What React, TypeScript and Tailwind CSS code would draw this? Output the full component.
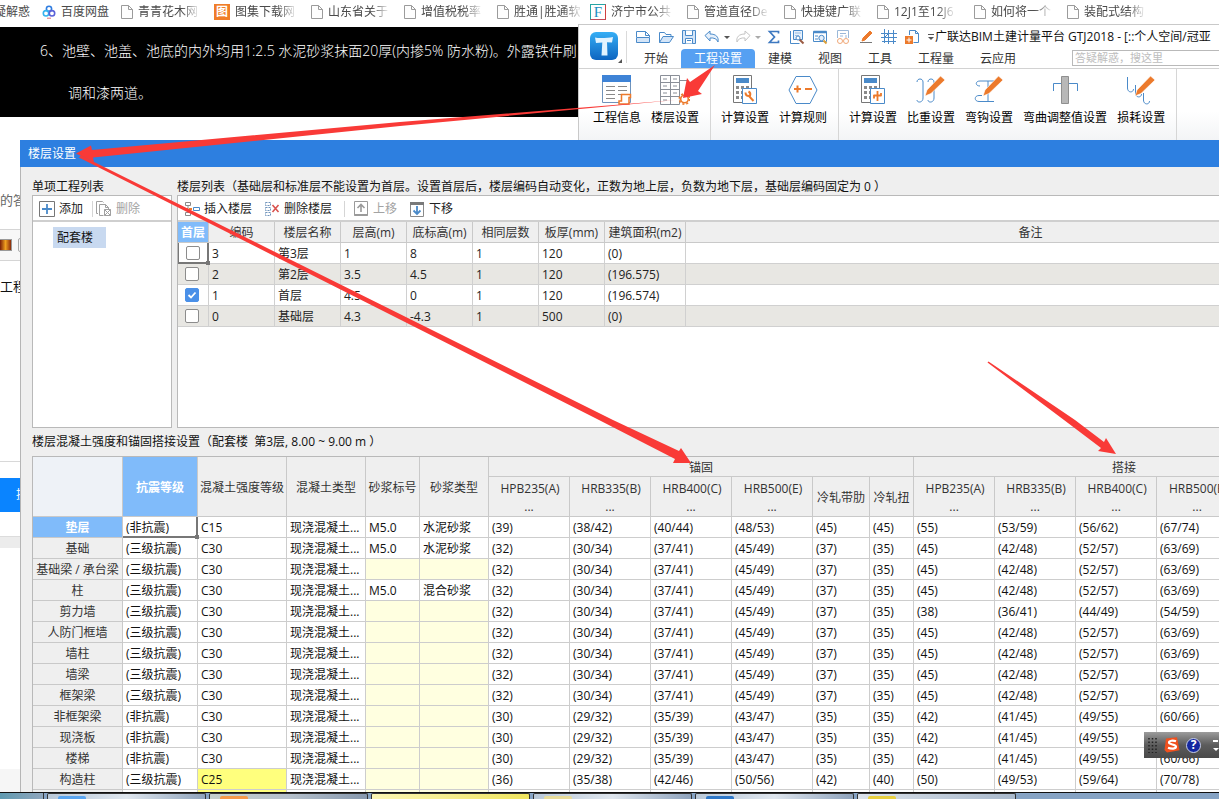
import React from "react";
import type { ReactNode } from "react";

const BLUE = "#4a8ac9";
const ORANGE = "#ec7a2c";
const GRAY = "#8a8a8a";

/* ---------- bookmarks bar ---------- */

function DocIcon() {
  return (
    <svg className="h-[14px] w-3 shrink-0" viewBox="0 0 12 14" fill="#fdfdfd" stroke="#9b9b9b">
      <path d="M.5.5h7l4 4v9h-11z" />
      <path d="M7.500.5v4h4" fill="none" />
    </svg>
  );
}

function CloudDriveIcon() {
  return (
    <svg className="h-[14px] w-[14px] shrink-0" viewBox="0 0 14 14" fill="none" strokeWidth="1.600">
      <circle cx="7" cy="3.800" r="2.600" stroke="#2f7de0" />
      <circle cx="4" cy="8.300" r="2.700" stroke="#35b3ee" />
      <circle cx="10" cy="8.300" r="2.700" stroke="#5a62d8" />
      <path d="M5 13.200h4" stroke="#e06a70" strokeWidth="1" />
    </svg>
  );
}

function AtlasIcon() {
  return (
    <span className="flex h-4 w-4 shrink-0 items-center justify-center bg-[#f07d28] text-[12px] leading-4 font-bold text-white">图</span>
  );
}

function FIcon() {
  return (
    <span className="flex h-4 w-4 shrink-0 items-center justify-center border border-t-[#27a5a5] border-r-[#d04040] border-b-[#c04a5a] border-l-[#27a5a5] font-['Liberation_Serif',serif] text-[15px] leading-4 text-[#1e8fc4]">F</span>
  );
}

const bookmarks: { text: string; width: string; icon: ReactNode }[] = [
  { text: "百度网盘", width: "w-[79px]", icon: <CloudDriveIcon /> },
  { text: "青青花木网", width: "w-[93px]", icon: <DocIcon /> },
  { text: "图集下载网", width: "w-[97px]", icon: <AtlasIcon /> },
  { text: "山东省关于", width: "w-[93px]", icon: <DocIcon /> },
  { text: "增值税税率", width: "w-[93px]", icon: <DocIcon /> },
  { text: "胜通|胜通软", width: "w-[93px]", icon: <DocIcon /> },
  { text: "济宁市公共", width: "w-[97px]", icon: <FIcon /> },
  { text: "管道直径De", width: "w-[97px]", icon: <DocIcon /> },
  { text: "快捷键广联", width: "w-[93px]", icon: <DocIcon /> },
  { text: "12J1至12J6", width: "w-[97px]", icon: <DocIcon /> },
  { text: "如何将一个", width: "w-[93px]", icon: <DocIcon /> },
  { text: "装配式结构", width: "w-[93px]", icon: <DocIcon /> },
];

function BookmarksBar() {
  return (
    <nav className="flex h-6 shrink-0 items-center overflow-hidden bg-white text-[#4a4a4a]">
      <a href="#" className="flex w-[42px] shrink-0 justify-start">
        <span className="-ml-1.5 whitespace-nowrap">疑解惑</span>
      </a>
      {bookmarks.map((b) => (
        <a key={b.text} href="#" className={`flex shrink-0 items-center gap-[5px] ${b.width}`}>
          {b.icon}
          <span
            className={
              b.text === "百度网盘"
                ? "whitespace-nowrap"
                : "whitespace-nowrap [mask-image:linear-gradient(to_right,black_72%,transparent_104%)]"
            }
          >
            {b.text}
          </span>
        </a>
      ))}
    </nav>
  );
}

/* ---------- ribbon ---------- */

function Q({ children }: { children: ReactNode }) {
  return (
    <svg className="h-4 w-4" viewBox="0 0 16 16" fill="none" stroke={BLUE}>
      {children}
    </svg>
  );
}

const quick: { name: string; icon: ReactNode; caret?: string }[] = [
  { name: "新建", icon: <Q><path d="M1.500 8V2.500h9l4 4V8M10.500 2.500v4h4" /><path d="M1.500 8.500h13v5h-13z" fill="#d4e5f8" /></Q> },
  { name: "打开", icon: <Q><path d="M1.500 13.500v-10h5l1.500 2h5v2" /><path d="M1.500 13.500l3.500-6h10.500l-4 6z" fill="#d4e5f8" /></Q> },
  { name: "保存", icon: <Q><path d="M1.500 1.500h13v13h-13z" fill="#d4e5f8" /><path d="M4.500 1.500v5h7v-5M4.500 14.500v-5h7v5M6 11.500h4" fill="#fff" /></Q> },
  { name: "撤销", icon: <Q><path d="M1 6.500l5-4.500v3c6 0 9 3 8 8-1-3-4-4.500-8-4v3z" fill="#e6f0fb" /></Q>, caret: "#555" },
  { name: "恢复", icon: <Q><path d="M15 6.500l-5-4.500v3c-6 0-9 3-8 8 1-3 4-4.500 8-4v3z" stroke="#c4c4c4" /></Q>, caret: "#aaa" },
  { name: "汇总计算", icon: <Q><path d="M12.500 4.500v-2h-9l5 5.500-5 5.500h9v-2" strokeWidth="1.700" stroke="#3d78c0" /></Q> },
  { name: "查看工程量", icon: <Q><path d="M4.500 1.500h9v9h-9z" fill="#e6f0fb" /><path d="M1.500 2v12.500h9M6.500 4h1m1 0h1m1 0h1M6.500 6.500h1m1 0h1" /><path d="M10.500 10.500l4 4" stroke="#9a5b43" strokeWidth="2" /><circle cx="9" cy="9" r="2" fill="#fff" /></Q> },
  { name: "查找图元", icon: <Q><path d="M1.500 2.500h13v10h-13z" /><path d="M1.500 3h13" strokeWidth="2.500" /><path d="M3 7h3M3 10h3" /><circle cx="9.500" cy="9" r="2.700" fill="#e6f0fb" /><path d="M11.500 11.500l3 3" stroke="#dca03a" strokeWidth="2" /></Q> },
  { name: "查看报表", icon: <Q><path d="M2.500 9V1.500h11V9" stroke="#9bb8d8" /><path d="M5 4.500h6M5 7h3m3-1v3" stroke="#9bb8d8" /><circle cx="5" cy="12" r="2.500" stroke="#f0a878" /><circle cx="11" cy="12" r="2.500" stroke="#f0a878" /></Q> },
  { name: "编辑", icon: <Q><path d="M5 9l7-7 2 2-7 7-3 1z" fill={ORANGE} stroke={ORANGE} /><path d="M2 13.500h12" stroke="#777" /></Q> },
  { name: "轴网", icon: <Q><path d="M3.500 0v14M7.500 1v14M12.500 1v14M0 4.500h16M0 8.500h16M1 12.500h14M4 8l4-4" /></Q> },
  { name: "导出", icon: <Q><path d="M5.500 6V1.500h6l3 3v9h-5" /><path d="M11.500 1.500v3h3" /><path d="M1 7h8v8H1z" fill={ORANGE} stroke="none" /><path d="M5 8.500v5M2.500 11h5" stroke="#fff" /></Q> },
];

function Caret({ color }: { color: string }) {
  return (
    <svg className="h-2 w-2 shrink-0" viewBox="0 0 8 8">
      <path d="M1 3h6L4 6z" fill={color} />
    </svg>
  );
}

function Big({ children }: { children: ReactNode }) {
  return (
    <svg className="h-[30px] w-[30px]" viewBox="0 0 30 30" fill="none" stroke={BLUE}>
      {children}
    </svg>
  );
}

const pencil = (
  <path d="M9 21l2-6L24.500 1l4.500 4L15 18.500z" fill={ORANGE} stroke="#fff" strokeWidth=".6" />
);

const calcBody = (
  <>
    <path d="M3.500.5h18v27h-18z" stroke="#777" fill="#fff" />
    <path d="M6 3h13v5H6z" fill={BLUE} stroke="none" />
    <path d="M6 11h3v3H6zM11 11h3v3h-3zM16 11h3v3h-3zM6 16h3v3H6zM11 16h3v3h-3zM6 21h3v3H6zM11 21h3v3h-3z" fill={GRAY} stroke="none" />
  </>
);

const ribbonGroups: { label: string; icon: ReactNode }[][] = [
  [
    {
      label: "工程信息",
      icon: <Big><path d="M.5.5h28v27H.5z" stroke="#6f93bb" fill="#fff" /><path d="M0 0h29v7H0z" fill="#3e83d6" stroke="none" /><path d="M4 11.500h9M16 11.500h9M4 15.500h9M16 15.500h9M4 19.500h9M16 19.500h9M4 23.500h9" stroke="#888" /><path d="M19.500 19.500h9v3h-1.500v6.500h-10v-3h2.500z" fill="#fff" stroke={ORANGE} strokeWidth="1.500" /></Big>,
    },
    {
      label: "楼层设置",
      icon: <Big><path d="M.5.500h19v29H.5zM10.500.5v29M.5 7.500h19M.5 14.500h19M.5 21.500h19M3 4h4M3 11h4M3 18h4M3 25h4M13 4h4M13 11h4M13 18h4M19.500 5.500h8v14" stroke="#8a8f98" /><circle cx="24.500" cy="24" r="5.200" fill="#fff" stroke={ORANGE} strokeWidth="1.600" strokeDasharray="2 2.080" /><circle cx="24.500" cy="24" r="3.800" fill="#fff" stroke={ORANGE} strokeWidth="1.600" /></Big>,
    },
  ],
  [
    {
      label: "计算设置",
      icon: <Big>{calcBody}<path d="M12.500 13.500h14v15h-14z" fill="#fff" /><path d="M15.500 17.500c0 3 2 3.500 3.500 3.500l4.500 5M18.500 16.500c2 1 2 3 1.500 4.500" stroke={ORANGE} strokeWidth="2" /></Big>,
    },
    {
      label: "计算规则",
      icon: <Big><path d="M8 1.500h14L29 15l-7 13.500H8L1 15z" fill="#fff" /><path d="M6 14h7M9.500 10.500v7M17 14h7" stroke={ORANGE} strokeWidth="2" /></Big>,
    },
  ],
  [
    {
      label: "计算设置",
      icon: <Big>{calcBody}<path d="M12.500 13.500h14v15h-14z" fill="#fff" /><path d="M19.500 16v10M15.500 20.500h8M16 20v3.500M23 18v3" stroke={ORANGE} strokeWidth="1.800" /></Big>,
    },
    {
      label: "比重设置",
      icon: <Big><path d="M1 7c0-4 6-4 6 0v16c0 5-6 5-6 2M12 7c0-4 6-4 6 0v16c0 5-6 5-6 2" />{pencil}</Big>,
    },
    {
      label: "弯钩设置",
      icon: <Big><path d="M6 11c-5 0-5-5 0-5h14M14 6v20M18 26.500H5c-5 0-5-6 0-6h3M12 26.500h8" />{pencil}</Big>,
    },
    {
      label: "弯曲调整值设置",
      icon: <Big><path d="M3.500 16V8.500h24V16" /><path d="M11.500 1.500h7v27h-7z" fill="#b8b8b8" stroke="#8f8f8f" /></Big>,
    },
    {
      label: "损耗设置",
      icon: <Big><path d="M1.500 2v11c0 5 6 5 6 1M9.500 10v8c0 5 6 5 6 1M17.500 18v7c0 5 6 5 6 1" />{pencil}</Big>,
    },
  ],
];

const tabs = ["开始", "工程设置", "建模", "视图", "工具", "工程量", "云应用"];

function AppLogo() {
  return (
    <svg className="h-8 w-8" viewBox="0 0 32 32">
      <defs>
        <linearGradient id="logo" x1="0" y1="0" x2="0" y2="1">
          <stop offset="0" stopColor="#35aef5" />
          <stop offset="1" stopColor="#0d64c0" />
        </linearGradient>
      </defs>
      <rect x="0" y="0" width="28" height="28" rx="6" fill="url(#logo)" />
      <path d="M5 5.500c4 1 13 .5 18-.5l-1 5.500-5-.3.5 13.300h-6l.8-13L6 11z" fill="#e2f3ff" />
      <path d="M32 27v4h-4z" fill="#555" />
    </svg>
  );
}

function Ribbon() {
  return (
    <section className="flex min-w-0 flex-1 flex-col overflow-hidden border-t border-l border-[#c9c9c9] bg-white">
      <div className="flex h-11 shrink-0 border-b border-[#d2d2d2]">
        <div className="flex w-12 shrink-0 items-center justify-end">
          <div className="flex h-8 items-start border-r border-[#dadada] pr-1 pt-px">
            <AppLogo />
          </div>
        </div>
        <div className="flex min-w-0 flex-1 flex-col justify-between">
          <div className="flex h-6 items-center overflow-hidden pl-1">
            {quick.map((q) => (
              <span key={q.name} className="flex shrink-0 items-center">
                <button type="button" aria-label={q.name} className="flex w-[23px] justify-center">
                  {q.icon}
                </button>
                {q.caret && <Caret color={q.caret} />}
              </span>
            ))}
            <svg className="ml-1 h-2 w-2 shrink-0" viewBox="0 0 8 8">
              <path d="M1 1.500h6" stroke="#555" />
              <path d="M1 4h6L4 7z" fill="#555" />
            </svg>
            <span className="whitespace-nowrap text-[#111]">
              广联达BIM土建计量平台 GTJ2018 - [::个人空间/冠亚
            </span>
          </div>
          <div className="flex h-[19px] items-center pl-1">
            {tabs.map((t) => (
              <button
                key={t}
                type="button"
                className={
                  t === "工程设置"
                    ? "h-[19px] shrink-0 rounded-t-sm bg-[#56a0f2] px-[13px] text-white"
                    : "h-[19px] shrink-0 px-[13px] text-[#333]"
                }
              >
                {t}
              </button>
            ))}
            <input
              type="text"
              aria-label="搜索"
              placeholder="答疑解惑，搜这里"
              className="mb-0.5 ml-[43px] h-4 min-w-0 flex-1 border border-r-0 border-[#b9b9b9] bg-white px-0.5 text-[11px] leading-4 outline-none placeholder:text-[#bdbdbd]"
            />
          </div>
        </div>
      </div>
      <div className="flex flex-1 bg-linear-to-b from-white from-60% to-[#f3f4f6] pl-1">
        {ribbonGroups.map((g, i) => (
          <div key={i} className="flex shrink-0 border-r border-[#d6d6d6] pt-1.5 pr-1.5 pl-[5px]">
            {g.map((b) => (
              <button key={b.label} type="button" className="flex flex-col items-center gap-[5px] px-[5px] text-black">
                {b.icon}
                <span className="whitespace-nowrap">{b.label}</span>
              </button>
            ))}
          </div>
        ))}
      </div>
    </section>
  );
}

/* ---------- dialog ---------- */

function TI({ children }: { children: ReactNode }) {
  return (
    <svg className="h-4 w-4 shrink-0" viewBox="0 0 16 16" fill="none" stroke={BLUE}>
      {children}
    </svg>
  );
}

function ToolButton({ icon, label, disabled }: { icon: ReactNode; label: string; disabled?: boolean }) {
  return (
    <button
      type="button"
      disabled={disabled}
      className={`flex shrink-0 items-center gap-1 ${disabled ? "text-[#a3a3a3]" : "text-[#222]"}`}
    >
      {icon}
      {label}
    </button>
  );
}

const Sep = () => <span className="h-4 w-px shrink-0 bg-[#d5d5d5]" />;

const floors = [
  { first: false, cells: ["3", "第3层", "1", "8", "1", "120", "(0)"] },
  { first: false, cells: ["2", "第2层", "3.5", "4.5", "1", "120", "(196.575)"] },
  { first: true, cells: ["1", "首层", "4.5", "0", "1", "120", "(196.574)"] },
  { first: false, cells: ["0", "基础层", "4.3", "-4.3", "1", "500", "(0)"] },
];
const floorHeads = ["编码", "楼层名称", "层高(m)", "底标高(m)", "相同层数", "板厚(mm)", "建筑面积(m2)", "备注"];
const floorCols = ["w-[31px]", "w-[66px]", "w-[66px]", "w-[66px]", "w-[66px]", "w-[66px]", "w-[66px]", "w-[81px]", "w-[690px]"];

const Handle = () => <span className="absolute -right-[3px] -bottom-[3px] z-10 h-1 w-1 bg-[#777]" />;

function FloorTable() {
  return (
    <table className="w-[1198px] table-fixed border-separate border-spacing-0 text-[#222]">
      <colgroup>
        {floorCols.map((c, i) => (
          <col key={i} className={c} />
        ))}
      </colgroup>
      <thead>
        <tr className="h-[21px]">
          <th className="border-r border-b border-[#c9c9c9] bg-[#80bbfa] px-0 pt-0.5 pb-0 font-bold text-white">首层</th>
          {floorHeads.map((h) => (
            <th key={h} className="border-r border-b border-[#c9c9c9] bg-[#efefef] px-0 pt-0.5 pb-0 font-normal whitespace-nowrap text-[#333]">
              {h}
            </th>
          ))}
        </tr>
      </thead>
      <tbody>
        {floors.map((f, i) => (
          <tr key={i} className={i % 2 ? "h-[21px] bg-[#e8e7e3]" : "h-[21px] bg-white"}>
            <td
              className={
                i === 0
                  ? "relative border border-t-0 border-r-2 border-b-2 border-[#777] p-0"
                  : "border-r border-b border-[#d0d0d0] py-0 pr-0.5 pl-0"
              }
            >
              <label className="grid place-items-center">
                <input
                  type="checkbox"
                  defaultChecked={f.first}
                  aria-label={`首层 ${f.cells[1]}`}
                  className="peer col-start-1 row-start-1 h-[14px] w-[14px] appearance-none rounded-xs border border-[#8c8c8c] bg-white checked:border-[#4a90e8] checked:bg-[#4a90e8]"
                />
                <svg className="pointer-events-none col-start-1 row-start-1 hidden h-[10px] w-[10px] peer-checked:block" viewBox="0 0 10 10" fill="none" stroke="#fff" strokeWidth="1.800">
                  <path d="M1.500 5l2.500 2.500L8.500 2.500" />
                </svg>
              </label>
              {i === 0 && <Handle />}
            </td>
            {f.cells.map((c, j) => (
              <td key={j} className="border-r border-b border-[#d0d0d0] pt-0.5 pr-0 pb-0 pl-[3px] whitespace-nowrap">
                {c}
              </td>
            ))}
            <td className="border-r border-b border-[#d0d0d0] p-0" />
          </tr>
        ))}
      </tbody>
    </table>
  );
}

const common = ["32", "30/34", "37/41", "45/49", "37", "35", "45", "42/48", "52/57", "63/69"];
const wall = ["32", "30/34", "37/41", "45/49", "37", "35", "38", "36/41", "44/49", "54/59"];
const slab = ["30", "29/32", "35/39", "43/47", "35", "35", "42", "41/45", "49/55", "60/66"];
const level3 = "(三级抗震)";
const none = "(非抗震)";

const members: { name: string; seismic: string; grade: string; mortar?: [string, string]; values: string[] }[] = [
  { name: "垫层", seismic: none, grade: "C15", mortar: ["M5.0", "水泥砂浆"], values: ["39", "38/42", "40/44", "48/53", "45", "45", "55", "53/59", "56/62", "67/74"] },
  { name: "基础", seismic: level3, grade: "C30", mortar: ["M5.0", "水泥砂浆"], values: common },
  { name: "基础梁 / 承台梁", seismic: level3, grade: "C30", values: common },
  { name: "柱", seismic: level3, grade: "C30", mortar: ["M5.0", "混合砂浆"], values: common },
  { name: "剪力墙", seismic: level3, grade: "C30", values: wall },
  { name: "人防门框墙", seismic: level3, grade: "C30", values: common },
  { name: "墙柱", seismic: level3, grade: "C30", values: common },
  { name: "墙梁", seismic: level3, grade: "C30", values: common },
  { name: "框架梁", seismic: level3, grade: "C30", values: common },
  { name: "非框架梁", seismic: none, grade: "C30", values: slab },
  { name: "现浇板", seismic: none, grade: "C30", values: slab },
  { name: "楼梯", seismic: none, grade: "C30", values: slab },
  { name: "构造柱", seismic: level3, grade: "C25", values: ["36", "35/38", "42/46", "50/56", "42", "40", "50", "49/53", "59/64", "70/78"] },
];

const memberCols = [
  "w-[90px]", "w-[75px]", "w-[89px]", "w-[79px]", "w-[54px]", "w-[69px]",
  "w-[81px]", "w-[81px]", "w-[81px]", "w-[81px]", "w-[57px]", "w-[44px]",
  "w-[81px]", "w-[81px]", "w-[81px]", "w-[81px]", "w-[97px]",
];
const bars = ["HPB235(A)", "HRB335(B)", "HRB400(C)", "HRB500(E)"];
const th = "border-r border-b border-[#c9c9c9] bg-[#efefef] px-0 pt-0.5 pb-0 font-normal whitespace-nowrap text-[#333]";
const thActive = "border-r border-b border-[#c9c9c9] bg-[#80bbfa] px-0 pt-0.5 pb-0 font-bold text-white";
const td = "border-r border-b border-[#cdcdcd] pt-0.5 pr-0 pb-0 pl-[3px] whitespace-nowrap";

function BarHead({ text }: { text: string }) {
  return (
    <th className={th}>
      <span className="block pl-0.5 leading-[19px]">{text}</span>
      <span className="block leading-[18px]">...</span>
    </th>
  );
}

function MemberTable() {
  return (
    <table className="w-[1302px] table-fixed border-separate border-spacing-0 bg-white text-[#111]">
      <colgroup>
        {memberCols.map((c, i) => (
          <col key={i} className={c} />
        ))}
      </colgroup>
      <thead>
        <tr className="h-5">
          <th rowSpan={2} className="border-r border-b border-[#c9c9c9] bg-[#eef2f7] p-0" />
          <th rowSpan={2} className={thActive}>抗震等级</th>
          <th rowSpan={2} className={th}>混凝土强度等级</th>
          <th rowSpan={2} className={th}>混凝土类型</th>
          <th rowSpan={2} className={th}>砂浆标号</th>
          <th rowSpan={2} className={th}>砂浆类型</th>
          <th colSpan={6} className={th}>锚固</th>
          <th colSpan={5} className={th}>搭接</th>
        </tr>
        <tr className="h-10">
          {bars.map((b) => (
            <BarHead key={b} text={b} />
          ))}
          <th className={th}>冷轧带肋</th>
          <th className={th}>冷轧扭</th>
          {bars.map((b) => (
            <BarHead key={b} text={b} />
          ))}
          <th className={th} />
        </tr>
      </thead>
      <tbody>
        {members.map((m, i) => (
          <tr key={m.name} className="h-[21px]">
            <th scope="row" className={i === 0 ? thActive : th}>
              {m.name}
            </th>
            <td
              className={
                i === 0
                  ? "relative border-r-2 border-b-2 border-[#777] pt-0.5 pr-0 pb-0 pl-[3px] whitespace-nowrap"
                  : td
              }
            >
              {m.seismic}
              {i === 0 && <Handle />}
            </td>
            <td className={m.grade === "C25" ? `${td} bg-[#ffff7d]` : td}>{m.grade}</td>
            <td className={td}>现浇混凝土...</td>
            <td className={m.mortar ? td : `${td} bg-[#ffffe0]`}>{m.mortar?.[0]}</td>
            <td className={m.mortar ? td : `${td} bg-[#ffffe0]`}>{m.mortar?.[1]}</td>
            {m.values.map((v, j) => (
              <td key={j} className={td}>{`(${v})`}</td>
            ))}
            <td className={td} />
          </tr>
        ))}
        <tr className="h-[21px]">
          <th scope="row" className={th} />
          <td className={td} />
          <td className={`${td} bg-[#ffff7d]`} />
          <td className={td} />
          <td className={`${td} bg-[#ffffe0]`} />
          <td className={`${td} bg-[#ffffe0]`} />
          {memberCols.slice(6).map((_, i) => (
            <td key={i} className={td} />
          ))}
        </tr>
      </tbody>
    </table>
  );
}

function FloorDialog() {
  return (
    <section className="flex min-w-0 flex-1 flex-col overflow-hidden bg-[#efefef]">
      <h1 className="flex h-[27px] shrink-0 items-center bg-[#2d7fe0] pl-2 text-white">楼层设置</h1>
      <div className="flex min-h-0 flex-1 flex-col overflow-hidden border-l border-[#b5b5b5] pt-3 pl-[11px]">
        <div className="flex shrink-0 gap-[5px]">
          <div className="w-[140px] shrink-0">
            <h2>单项工程列表</h2>
            <div className="h-[233px] border border-[#b9b9b9] bg-white">
              <div className="flex h-[26px] items-center gap-[9px] border-b-2 border-[#cfcfcf] pt-0.5 pl-1.5">
                <ToolButton label="添加" icon={<TI><path d="M.5.500h15v15H.5z" stroke="#777" /><path d="M8 3v10M3 8h10" strokeWidth="1.800" /></TI>} />
                <div className="flex items-center gap-[3px]">
                  <Sep />
                  <ToolButton
                    disabled
                    label="删除"
                    icon={<TI><path d="M2 12.500H.5V.500h6l1 1M3.500 3.500h6l3 3v2M9.500 3.500v3h3M3.500 3.500v11h4" stroke="#a0a0a0" /><path d="M8.500 8.500h6v6h-6zM8.500 8.500l6 6M14.500 8.500l-6 6" stroke="#a0a0a0" /></TI>}
                  />
                </div>
              </div>
              <button type="button" className="mt-[5px] ml-5 block h-[21px] w-[53px] bg-[#c8d9f0] pt-px pl-1 text-left">配套楼</button>
            </div>
          </div>
          <div className="min-w-0 flex-1">
            <h2 className="whitespace-nowrap">
              楼层列表（基础层和标准层不能设置为首层。设置首层后，楼层编码自动变化，正数为地上层，负数为地下层，基础层编码固定为 0 ）
            </h2>
            <div className="h-[233px] overflow-hidden border border-r-0 border-[#b9b9b9] bg-white">
              <div className="flex h-[26px] items-center gap-3 border-b-2 border-[#cfcfcf] pt-0.5 pl-1.5">
                <ToolButton
                  label="插入楼层"
                  icon={<TI><path d="M1.500 1.500h5v3h-5zM1.500 11.500h5v3h-5zM4 4.500v7" stroke="#8a8a8a" /><path d="M9.500 6.500h6v3h-6z" /><path d="M1 8h7" stroke={ORANGE} strokeWidth="1.800" strokeDasharray="3 1" /></TI>}
                />
                <ToolButton
                  label="删除楼层"
                  icon={<TI><path d="M1.500 1.500h5v3h-5zM1.500 6.500h5v3h-5zM1.500 11.500h5v3h-5z" strokeDasharray="2 1" stroke="#6f93bb" /><path d="M8.500 4l6 7M14.500 4l-6 7" stroke="#d9534f" strokeWidth="1.600" /></TI>}
                />
                <div className="flex items-center gap-2">
                  <Sep />
                  <ToolButton
                    disabled
                    label="上移"
                    icon={<TI><path d="M1.500.5h13v14h-13z" stroke="#9a9a9a" /><path d="M1.500 14h13" stroke="#9a9a9a" strokeWidth="2" /><path d="M8 11V4M4.500 7L8 3.500 11.500 7" stroke="#9a9a9a" strokeWidth="1.600" /></TI>}
                  />
                </div>
                <ToolButton
                  label="下移"
                  icon={<TI><path d="M1.500 1.500h13v14h-13z" stroke="#8a8a8a" /><path d="M1 2.500h14" stroke="#7a7a7a" strokeWidth="3" /><path d="M8 5v8M4.500 9.500L8 13l3.500-3.500" strokeWidth="1.800" /></TI>}
                />
              </div>
              <FloorTable />
            </div>
          </div>
        </div>
        <h2 className="my-1.5 shrink-0 whitespace-pre">楼层混凝土强度和锚固搭接设置（配套楼  第3层, 8.00 ~ 9.00 m ）</h2>
        <div className="min-h-0 flex-1 overflow-hidden border-t border-l border-[#b9b9b9]">
          <MemberTable />
        </div>
      </div>
    </section>
  );
}

/* ---------- page behind the dialog ---------- */

function PageStrip() {
  return (
    <aside className="flex w-5 shrink-0 flex-col overflow-hidden bg-white whitespace-nowrap">
      <p className="mt-[50px] text-[13px] leading-5 text-[#666]">的答</p>
      <div className="mt-[19px] flex h-8 shrink-0 items-center gap-1.5 border-y border-[#d5d5d5] bg-[#f7f7f7]">
        <span className="h-3 w-3 shrink-0 border border-l-0 border-[#999] bg-linear-to-r from-[#7a1d08] via-[#f0a020] to-[#8a2a0c]" />
        <span className="h-3.5 w-3 shrink-0 rounded-xs border border-[#aaa]" />
      </div>
      <p className="mt-[15px] text-[13px] leading-5">工程</p>
      <div className="mt-[165px] h-px shrink-0 bg-[#d8d8d8]" />
      <a href="#" className="mt-4 flex h-[34px] shrink-0 items-center bg-[#0a84ff] pl-4 text-white">提</a>
      <div className="mt-6 h-3 shrink-0 border-t border-[#dcdcdc] bg-[#ececec]" />
      <div className="mt-[221px] flex-1 bg-[#f6f6f6]" />
    </aside>
  );
}

function Drawing() {
  return (
    <section className="flex w-[578px] shrink-0 flex-col overflow-hidden bg-white pt-[3px]">
      <div className="h-[90px] overflow-hidden bg-black pt-3 pl-10 text-[14px] font-light whitespace-nowrap text-white">
        <p className="leading-6">6、池壁、池盖、池底的内外均用1:2.5 水泥砂浆抹面20厚(内掺5% 防水粉)。外露铁件刷</p>
        <p className="mt-[18px] pl-7 leading-6">调和漆两道。</p>
      </div>
    </section>
  );
}

/* ---------- overlays ---------- */

function Arrows() {
  return (
    <svg className="pointer-events-none absolute top-0 left-0 h-[799px] w-[1219px]" viewBox="0 0 1219 799" fill="#f93a37">
      <path d="M715 65L698 91l4 3-19 4 4-20 3 4z" />
      <path d="M676 100L400 126 93 157.500 94 162 76 153.500 91 145.500 92 150 400 122z" />
      <path d="M81 155.500L613 420 679 451l2-3 10 15-18 0 2-4L599 420 79 157.500z" />
      <path d="M988.500 361.500L1075 420l29 22 2-4 10 16-18-3 3-3L1064 420 987.500 362.500z" />
    </svg>
  );
}

function ImeBar() {
  return (
    <div className="absolute top-[732px] right-0 flex h-[26px] w-[75px] items-center gap-1.5 bg-linear-to-b from-[#9c9c9c] via-[#5c5c5c] to-[#4a4a4a] pl-1">
      <svg className="h-4 w-2.5" viewBox="0 0 10 16" fill="none" stroke="#222" strokeWidth="1.500">
        <path d="M1 1v15M4.500 1v15M8 1v15" strokeDasharray="1.500 2" />
      </svg>
      <svg className="h-4 w-4" viewBox="0 0 16 16">
        <path d="M2 1.500l11-1.200 2.500 13L3 15.500 .5 13z" fill="#f0501e" />
        <path d="M12 4.300c-3-1.200-7-.8-7 1.300s7 1.600 7 4-4.500 2.600-8 1.200" fill="none" stroke="#fff" strokeWidth="2.200" />
      </svg>
      <span className="flex h-[15px] w-[15px] items-center justify-center rounded-full border border-[#c8d0e8] bg-[#1428a0] text-[12px] leading-3 font-bold text-white">?</span>
      <svg className="ml-auto h-4 w-2" viewBox="0 0 8 16" fill="#fff">
        <path d="M2 3h5v2H2zM2 11h6l-3 3z" />
      </svg>
    </div>
  );
}

const plain = "bg-linear-to-r from-[#b9c8d8] via-[#dfe6ee] to-[#8fa3bc]";
const tasks = [
  { shade: plain, dot: "bg-[#5aa5f0]" },
  { shade: "bg-linear-to-r from-[#c5d0cc] via-[#b5c0cc] to-[#8798ae]", dot: "bg-[#f59a4a]" },
  { shade: "bg-linear-to-r from-[#fbf6b4] to-[#efe45e]", dot: "" },
  { shade: plain, dot: "bg-[#e8dc9a]" },
  { shade: plain, dot: "bg-[#2f78c8]" },
  { shade: "bg-linear-to-r from-[#dbe2ea] to-[#a9b9cc]", dot: "bg-[#e8d040]" },
];

function Taskbar() {
  return (
    <footer className="flex h-[7px] shrink-0 gap-[3px] border-t border-[#111] bg-[#86a3c4]">
      <span className="w-11 shrink-0 border-r border-[#333] bg-linear-to-r from-[#5f9ab0] to-[#8fa6bd]" />
      {tasks.map((t, i) => (
        <span key={i} className={`flex w-[159px] shrink-0 items-end rounded-t-xs border-x border-t border-[#333] pl-2.5 ${t.shade}`}>
          <span className={`h-[3px] w-7 rounded-t-xs ${t.dot}`} />
        </span>
      ))}
    </footer>
  );
}

export default function App() {
  return (
    <div className="relative flex h-screen flex-col overflow-hidden bg-white font-['Open_Sans','Noto_Sans_CJK_SC',sans-serif] text-[12px] leading-4 text-[#111]">
      <BookmarksBar />
      <div className="flex h-[116px] shrink-0">
        <Drawing />
        <Ribbon />
      </div>
      <main className="flex min-h-0 flex-1">
        <PageStrip />
        <FloorDialog />
      </main>
      <Taskbar />
      <Arrows />
      <ImeBar />
    </div>
  );
}
